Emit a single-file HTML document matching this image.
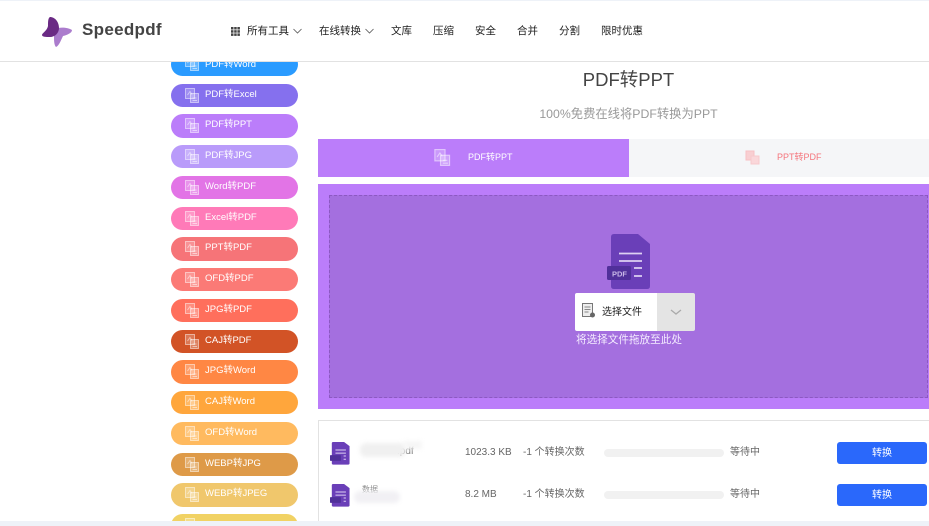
<!DOCTYPE html>
<html><head><meta charset="utf-8">
<style>
html,body{margin:0;padding:0;width:929px;height:526px;overflow:hidden;background:#fff;font-family:"Liberation Sans","Noto Sans CJK SC",sans-serif}
#w{position:relative;width:929px;height:526px;overflow:hidden;background:#fff}
.a{position:absolute;white-space:nowrap}
.p{position:absolute;left:171px;width:127px;border-radius:12px;color:#fff;font-size:9.5px}
.p span{position:absolute;left:34px;top:0;line-height:21px}
.p svg{position:absolute;left:14px;top:4px}
.n{position:absolute;top:22px;font-size:10.5px;line-height:16px;color:#222;white-space:nowrap}
.t{font-size:10px;color:#666;line-height:14px}
.b{position:absolute;left:837px;width:90px;height:22px;background:#2a68fb;border-radius:3px;color:#fff;font-size:10px;line-height:23px;text-align:center}
.g{position:absolute;left:604px;width:120px;height:8px;background:#f1f1f1;border-radius:4px}
</style></head><body><div id="w">
<svg width="0" height="0" style="position:absolute"><defs>
<g id="ic" fill="none" stroke="#fff" stroke-opacity=".5" stroke-width="1"><rect x=".5" y=".5" width="9" height="10" fill="#fff" fill-opacity=".22"/><rect x="5.500" y="5.500" width="8" height="9" fill="#fff" fill-opacity=".28"/><path d="M2.500 7l2.500-3.500 2 3"/><path d="M7.500 12.500h4.500M7.500 10h4"/></g>
<g id="doc"><path d="M4 3Q4 0 7 0H31L43 10V52Q43 55 40 55H7Q4 55 4 52Z" fill="#6a3fb8"/><rect x="0" y="32" width="24" height="14" rx="1.500" fill="#50309a"/><path d="M12 19.500H35M12 27H35M30 34H35M30 42H35" stroke="#ddd0f2" stroke-width="2.500"/></g>
</defs></svg>

<div class="a" style="left:0;top:0;width:929px;height:1px;background:#eef2f8"></div>

<div class="p" style="top:53px;height:23px;background:#2a9bff"><span style="top:1px">PDF转Word</span><svg width="14" height="15" style="top:3px"><use href="#ic"/></svg></div>
<div class="p" style="top:84px;height:23px;background:#8570ee"><span>PDF转Excel</span><svg width="14" height="15"><use href="#ic"/></svg></div>
<div class="p" style="top:114px;height:24px;background:#bb7dfa"><span>PDF转PPT</span><svg width="14" height="15"><use href="#ic"/></svg></div>
<div class="p" style="top:145px;height:23px;background:#b99bfa"><span>PDF转JPG</span><svg width="14" height="15"><use href="#ic"/></svg></div>
<div class="p" style="top:176px;height:23px;background:#e274e6"><span>Word转PDF</span><svg width="14" height="15"><use href="#ic"/></svg></div>
<div class="p" style="top:207px;height:23px;background:#ff7ab8"><span>Excel转PDF</span><svg width="14" height="15"><use href="#ic"/></svg></div>
<div class="p" style="top:237px;height:24px;background:#f67478"><span>PPT转PDF</span><svg width="14" height="15"><use href="#ic"/></svg></div>
<div class="p" style="top:268px;height:23px;background:#fb7a76"><span>OFD转PDF</span><svg width="14" height="15"><use href="#ic"/></svg></div>
<div class="p" style="top:299px;height:23px;background:#ff6f5c"><span>JPG转PDF</span><svg width="14" height="15"><use href="#ic"/></svg></div>
<div class="p" style="top:330px;height:23px;background:#d25326"><span>CAJ转PDF</span><svg width="14" height="15"><use href="#ic"/></svg></div>
<div class="p" style="top:360px;height:24px;background:#ff8744"><span>JPG转Word</span><svg width="14" height="15"><use href="#ic"/></svg></div>
<div class="p" style="top:391px;height:23px;background:#ffa63c"><span>CAJ转Word</span><svg width="14" height="15"><use href="#ic"/></svg></div>
<div class="p" style="top:422px;height:23px;background:#ffba5f"><span>OFD转Word</span><svg width="14" height="15"><use href="#ic"/></svg></div>
<div class="p" style="top:453px;height:23px;background:#de9a48"><span>WEBP转JPG</span><svg width="14" height="15"><use href="#ic"/></svg></div>
<div class="p" style="top:483px;height:24px;background:#f0c76c"><span>WEBP转JPEG</span><svg width="14" height="15"><use href="#ic"/></svg></div>
<div class="p" style="top:514px;height:23px;background:#f1d264"><svg width="14" height="15"><use href="#ic"/></svg></div>

<div class="a" style="left:0;top:1px;width:929px;height:60px;background:#fff;border-bottom:1px solid #e2e2e2">
<svg style="position:absolute;left:41px;top:15px" width="32" height="32" viewBox="0 0 32 32"><path d="M17 12C22 11 28 12 31 14C31 17 26 19 22 20C20 24 18 30 15 31C13 29 13 24 13 20Z" fill="#ab7ccd"/><path d="M9 1C14 1 18 6 18 12C18 17 14 21 9 21C5 21 1 21 1 19C1 17 6 15 7 10C7 6 7 2 9 1Z" fill="#6a2a84"/></svg>
<div class="a" style="left:82px;top:18px;font-size:17px;font-weight:bold;color:#444;line-height:22px;letter-spacing:.3px">Speedpdf</div>
<svg style="position:absolute;left:231px;top:26px" width="9" height="9"><g fill="#444"><rect width="2.500" height="2.500"/><rect x="3.200" width="2.500" height="2.500"/><rect x="6.400" width="2.500" height="2.500"/><rect y="3.200" width="2.500" height="2.500"/><rect x="3.200" y="3.200" width="2.500" height="2.500"/><rect x="6.400" y="3.200" width="2.500" height="2.500"/><rect y="6.400" width="2.500" height="2.500"/><rect x="3.200" y="6.400" width="2.500" height="2.500"/><rect x="6.400" y="6.400" width="2.500" height="2.500"/></g></svg>
<div class="n" style="left:247px">所有工具</div>
<svg style="position:absolute;left:293px;top:27px" width="9" height="6"><path d="M.5 1l4 4 4-4" fill="none" stroke="#555" stroke-width=".8"/></svg>
<div class="n" style="left:319px">在线转换</div>
<svg style="position:absolute;left:365px;top:27px" width="9" height="6"><path d="M.5 1l4 4 4-4" fill="none" stroke="#555" stroke-width=".8"/></svg>
<div class="n" style="left:391px">文库</div>
<div class="n" style="left:433px">压缩</div>
<div class="n" style="left:475px">安全</div>
<div class="n" style="left:517px">合并</div>
<div class="n" style="left:559px">分割</div>
<div class="n" style="left:601px">限时优惠</div>
</div>

<div class="a" style="left:318px;width:621px;top:67px;text-align:center;font-size:18.500px;line-height:26px;color:#444">PDF转PPT</div>
<div class="a" style="left:318px;width:621px;top:105px;text-align:center;font-size:12.300px;line-height:18px;color:#999">100%免费在线将PDF转换为PPT</div>

<div class="a" style="left:318px;top:139px;width:311px;height:38px;background:#bb7dfa"></div>
<div class="a" style="left:629px;top:139px;width:300px;height:38px;background:#f5f6f8"></div>
<svg style="position:absolute;left:434px;top:149px" width="17" height="17" viewBox="0 0 14.500 15"><use href="#ic"/></svg>
<div class="a" style="left:468px;top:149px;font-size:9px;line-height:16px;color:#fff">PDF转PPT</div>
<svg style="position:absolute;left:745px;top:150px" width="15" height="15" viewBox="0 0 15 15"><rect x="1" y="1" width="8" height="9" fill="#f8cfd2" stroke="#f7c0c4"/><rect x="6" y="6" width="8" height="8" fill="#fad7da" stroke="#f7c9cc"/></svg>
<div class="a" style="left:777px;top:149px;font-size:9px;line-height:16px;color:#f5757c">PPT转PDF</div>

<div class="a" style="left:318px;top:184px;width:611px;height:225px;background:#bb7dfa"></div>
<div class="a" style="left:329px;top:195px;width:597px;height:201px;background:#a46fdf;border:1px dashed #8c58c2"></div>

<svg style="position:absolute;left:607px;top:234px" width="44" height="56" viewBox="0 0 44 56"><path d="M4 3Q4 0 7 0H31L43 10V52Q43 55 40 55H7Q4 55 4 52Z" fill="#6a3fb8"/><rect x="0" y="32" width="24" height="14" rx="1.500" fill="#50309a"/><text x="5" y="42.500" font-family="Liberation Sans" font-size="7.500" font-weight="bold" fill="#c9b8e8">PDF</text><path d="M12 19.500H35M12 27H35M27 34H35M27 42H35" stroke="#ddd0f2" stroke-width="1.800"/></svg>

<div class="a" style="left:575px;top:293px;width:82px;height:38px;background:#fff;border-radius:2px 0 0 2px"></div>
<div class="a" style="left:657px;top:293px;width:38px;height:38px;background:#e4e4e4;border-radius:0 2px 2px 0"></div>
<svg style="position:absolute;left:582px;top:303px" width="14" height="16"><rect x=".5" y=".5" width="10" height="13" fill="#eee" stroke="#777"/><path d="M2.500 4h6M2.500 6.500h6M2.500 9h4" stroke="#888"/><circle cx="10.500" cy="12" r="2.500" fill="#666"/></svg>
<div class="a" style="left:602px;top:305px;font-size:10px;line-height:15px;color:#222">选择文件</div>
<svg style="position:absolute;left:670px;top:309px" width="12" height="7"><path d="M1 1l5 4 5-4" fill="none" stroke="#aaa" stroke-width="1.300"/></svg>
<div class="a" style="left:576px;top:332px;font-size:10.600px;line-height:16px;color:#f4ecff">将选择文件拖放至此处</div>

<div class="a" style="left:318px;top:420px;width:611px;height:1px;background:#e2e2e2"></div>
<div class="a" style="left:318px;top:420px;width:1px;height:101px;background:#e2e2e2"></div>

<svg style="position:absolute;left:330px;top:442px" width="20" height="23" viewBox="0 0 44 56" preserveAspectRatio="none"><use href="#doc"/></svg>
<svg style="position:absolute;left:330px;top:484px" width="20" height="23" viewBox="0 0 44 56" preserveAspectRatio="none"><use href="#doc"/></svg>
<div class="a" style="left:397px;top:446px;font-size:10px;line-height:12px;color:#777">.pdf</div>
<div class="a" style="left:360px;top:443px;width:46px;height:14px;background:#f0f0f0;filter:blur(2px);border-radius:6px"></div>
<div class="a" style="left:404px;top:441px;width:18px;height:8px;background:#f6f6f6;filter:blur(2px)"></div>
<div class="a" style="left:362px;top:484px;font-size:8px;line-height:12px;color:#888">数据</div>
<div class="a" style="left:354px;top:491px;width:46px;height:12px;background:#f1f0f4;filter:blur(2px);border-radius:6px"></div>

<div class="a t" style="left:465px;top:446px">1023.3 KB</div>
<div class="a t" style="left:465px;top:488px">8.2 MB</div>
<div class="a t" style="left:523px;top:446px">-1 个转换次数</div>
<div class="a t" style="left:523px;top:488px">-1 个转换次数</div>
<div class="g" style="top:449px"></div>
<div class="g" style="top:491px"></div>
<div class="a t" style="left:730px;top:446px">等待中</div>
<div class="a t" style="left:730px;top:488px">等待中</div>
<div class="b" style="top:442px">转换</div>
<div class="b" style="top:484px">转换</div>

<div class="a" style="left:0;top:521px;width:929px;height:5px;background:#eef2f8"></div>
</div></body></html>
